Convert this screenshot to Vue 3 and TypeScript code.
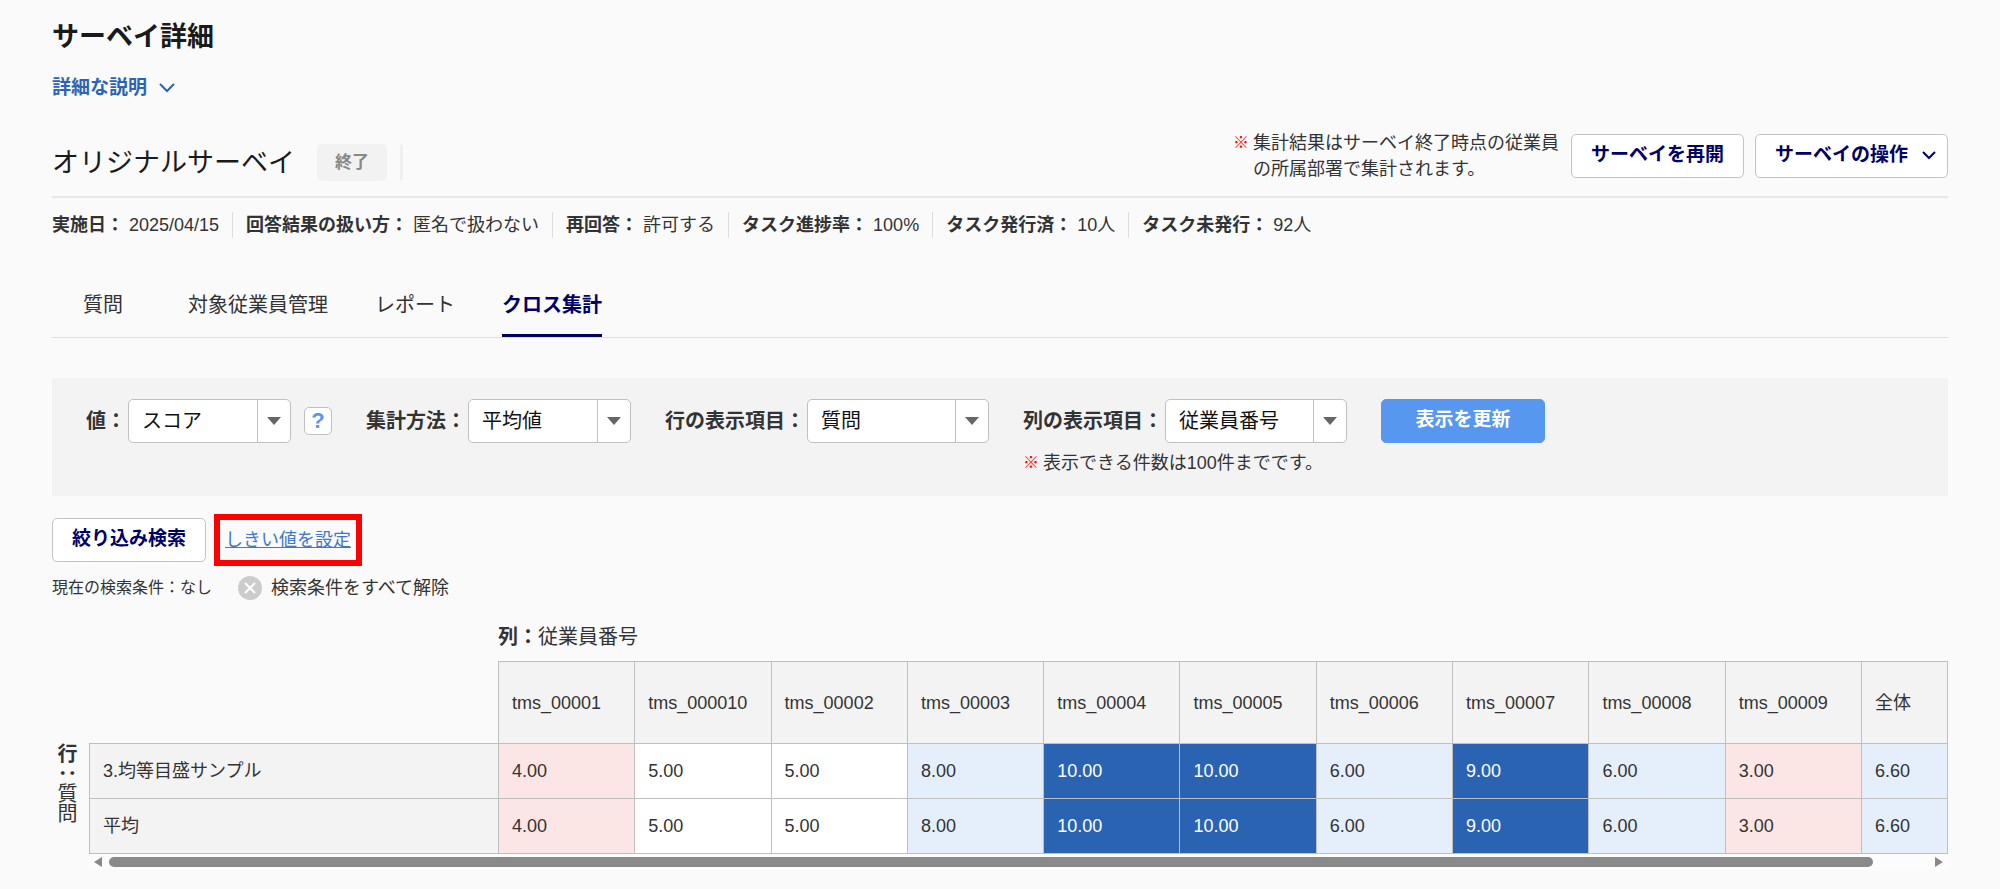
<script setup lang="ts">
import { ref } from 'vue'

interface InfoItem {
  label: string
  value: string
}

interface FilterField {
  id: string
  label: string
  options: string[]
  wide: boolean
  help?: boolean
  note?: string
}

const info: InfoItem[] = [
  { label: '実施日：', value: '2025/04/15' },
  { label: '回答結果の扱い方：', value: '匿名で扱わない' },
  { label: '再回答：', value: '許可する' },
  { label: 'タスク進捗率：', value: '100%' },
  { label: 'タスク発行済：', value: '10人' },
  { label: 'タスク未発行：', value: '92人' },
]

const tabs = ['質問', '対象従業員管理', 'レポート', 'クロス集計']
const activeTab = ref('クロス集計')

const filters: FilterField[] = [
  { id: 'value', label: '値：', options: ['スコア'], wide: false, help: true },
  { id: 'method', label: '集計方法：', options: ['平均値'], wide: false },
  { id: 'rows', label: '行の表示項目：', options: ['質問'], wide: true },
  { id: 'columns', label: '列の表示項目：', options: ['従業員番号'], wide: true, note: '表示できる件数は100件までです。' },
]

const columns = [
  'tms_00001', 'tms_000010', 'tms_00002', 'tms_00003', 'tms_00004', 'tms_00005',
  'tms_00006', 'tms_00007', 'tms_00008', 'tms_00009', '全体',
]

const scores = [4, 5, 5, 8, 10, 10, 6, 9, 6, 3, 6.6]
const rows = [
  { name: '3.均等目盛サンプル', scores },
  { name: '平均', scores },
]

function level(score: number): string {
  if (score >= 9) return 'top'
  if (score >= 6) return 'high'
  if (score < 5) return 'low'
  return 'mid'
}
</script>

<template>
  <main class="page" lang="ja">
    <h1 class="page-title">サーベイ詳細</h1>
    <button type="button" class="more">
      詳細な説明
      <svg class="more-icon" viewBox="0 0 16 10" aria-hidden="true"><path d="M1 1l7 7 7-7" /></svg>
    </button>

    <header class="survey">
      <div class="survey-name">
        <h2>オリジナルサーベイ</h2>
        <span class="badge">終了</span>
        <span class="badge-edge"></span>
      </div>
      <div class="survey-actions">
        <p class="notice"><span class="mark">※</span><span>集計結果はサーベイ終了時点の従業員<br />の所属部署で集計されます。</span></p>
        <div class="buttons">
          <button type="button" class="btn">サーベイを再開</button>
          <button type="button" class="btn btn-menu">
            サーベイの操作
            <svg class="menu-icon" viewBox="0 0 14 9" aria-hidden="true"><path d="M1 1l6 6 6-6" /></svg>
          </button>
        </div>
      </div>
    </header>

    <dl class="info">
      <div v-for="item in info" :key="item.label" class="info-item">
        <dt>{{ item.label }}</dt>
        <dd>{{ item.value }}</dd>
      </div>
    </dl>

    <nav class="tabs">
      <button
        v-for="tab in tabs"
        :key="tab"
        type="button"
        class="tab"
        :class="{ active: tab === activeTab }"
        @click="activeTab = tab"
      >{{ tab }}</button>
    </nav>

    <form class="filters" @submit.prevent>
      <div v-for="field in filters" :key="field.id" class="field">
        <div class="field-line">
          <label :for="field.id">{{ field.label }}</label>
          <div class="select" :class="{ wide: field.wide }">
            <select :id="field.id">
              <option v-for="option in field.options" :key="option">{{ option }}</option>
            </select>
            <span class="arrow"><svg viewBox="0 0 14 8" aria-hidden="true"><path d="M0 0h14L7 8z" /></svg></span>
          </div>
          <button v-if="field.help" type="button" class="help" aria-label="ヘルプ">?</button>
        </div>
        <p v-if="field.note" class="field-note"><span class="mark">※</span>{{ field.note }}</p>
      </div>
      <button type="submit" class="btn btn-primary">表示を更新</button>
    </form>

    <div class="search">
      <button type="button" class="btn btn-search">絞り込み検索</button>
      <div class="highlight"><a href="#">しきい値を設定</a></div>
    </div>
    <div class="conditions">
      <span class="current">現在の検索条件：なし</span>
      <button type="button" class="clear">
        <svg class="clear-icon" viewBox="0 0 24 24" aria-hidden="true">
          <circle cx="12" cy="12" r="12" />
          <path d="M7 7l10 10M17 7L7 17" />
        </svg>
        検索条件をすべて解除
      </button>
    </div>

    <section class="cross">
      <p class="row-axis"><b>行：</b>質問</p>
      <div class="cross-body">
        <p class="column-axis"><b>列：</b>従業員番号</p>
        <table>
          <colgroup>
            <col class="col-name" />
            <col v-for="column in columns" :key="column" :class="{ 'col-total': column === '全体' }" />
          </colgroup>
          <thead>
            <tr>
              <td class="corner"></td>
              <th v-for="column in columns" :key="column" scope="col">{{ column }}</th>
            </tr>
          </thead>
          <tbody>
            <tr v-for="row in rows" :key="row.name">
              <th scope="row">{{ row.name }}</th>
              <td v-for="(score, i) in row.scores" :key="i" :class="level(score)">{{ score.toFixed(2) }}</td>
            </tr>
          </tbody>
        </table>
        <div class="scrollbar" aria-hidden="true">
          <svg viewBox="0 0 8 10"><path d="M8 0v10L0 5z" /></svg>
          <div class="track"><div class="thumb"></div></div>
          <svg viewBox="0 0 8 10"><path d="M0 0v10l8-5z" /></svg>
        </div>
      </div>
    </section>
  </main>
</template>

<style>
body {
  background: #fafafa;
}
</style>

<style scoped>
.page {
  padding: 17px 52px 20px;
  color: #333;
  font-family: 'Liberation Sans', 'Noto Sans CJK JP', sans-serif;
  font-size: 18px;
  line-height: 26px;
}

.page * {
  box-sizing: border-box;
}

h1,
h2,
p,
dl,
dd {
  margin: 0;
}

button,
select {
  font-family: inherit;
  cursor: pointer;
}

.page-title {
  color: #1a1a1a;
  font-size: 27px;
  line-height: 40px;
}

.more {
  display: flex;
  align-items: center;
  gap: 12px;
  margin-top: 18px;
  padding: 0;
  border: 0;
  background: none;
  color: #2c63b4;
  font-size: 19px;
  font-weight: bold;
  line-height: 26px;
}

.more-icon {
  width: 16px;
  height: 10px;
  fill: none;
  stroke: currentColor;
  stroke-width: 2;
}

.survey {
  display: flex;
  justify-content: space-between;
  align-items: flex-start;
  margin-top: 29px;
  padding-bottom: 14px;
  border-bottom: 2px solid #e8e8e8;
}

.survey-name {
  display: flex;
  align-items: center;
  margin-top: 14px;
}

.survey-name h2 {
  color: #1a1a1a;
  font-size: 27px;
  font-weight: normal;
  line-height: 36px;
}

.badge {
  margin-left: 22px;
  padding: 0 18px;
  border-radius: 5px;
  background: #f2f2f2;
  color: #888;
  font-size: 17px;
  font-weight: bold;
  line-height: 37px;
}

.badge-edge {
  width: 3px;
  height: 37px;
  margin-left: 13px;
  border-radius: 0 3px 3px 0;
  background: #f0f0f0;
}

.survey-actions {
  display: flex;
  align-items: center;
  gap: 12px;
}

.notice {
  display: flex;
  gap: 4px;
}

.mark {
  color: #f00;
  font-size: 16px;
}

.buttons {
  display: flex;
  gap: 11px;
}

.btn {
  height: 44px;
  padding: 0 19px 2px;
  border: 1px solid #c4c4c4;
  border-radius: 5px;
  background: #fff;
  color: #006;
  font-size: 19px;
  font-weight: bold;
  line-height: 28px;
}

.btn-menu {
  display: flex;
  align-items: center;
  gap: 14px;
  padding-right: 11px;
}

.menu-icon {
  width: 14px;
  height: 9px;
  fill: none;
  stroke: currentColor;
  stroke-width: 2;
}

.info {
  display: flex;
  margin-top: 14px;
}

.info-item {
  display: flex;
  gap: 5px;
}

.info-item + .info-item {
  margin-left: 13px;
  padding-left: 13px;
  border-left: 1px solid #ddd;
}

dt {
  font-weight: bold;
}

.tabs {
  display: flex;
  margin-top: 52px;
  padding-left: 31px;
  border-bottom: 1px solid #ddd;
}

.tab {
  margin-right: 47px;
  padding: 0 0 14px;
  border: 0;
  border-bottom: 3px solid transparent;
  background: none;
  color: #333;
  font-size: 20px;
  line-height: 30px;
}

.tab:first-child {
  margin-right: 65px;
}

.tab.active {
  border-bottom-color: #006;
  color: #006;
  font-weight: bold;
}

.filters {
  display: flex;
  align-items: flex-start;
  gap: 34px;
  min-height: 118px;
  margin-top: 40px;
  padding: 21px 34px 0;
  background: #f3f3f3;
}

.field-line {
  display: flex;
  align-items: center;
}

.field-line label {
  margin-right: 2px;
  font-size: 20px;
  font-weight: bold;
  line-height: 30px;
}

.select {
  display: grid;
  grid-template-columns: 1fr 33px;
  width: 163px;
  height: 44px;
  border: 1px solid #c0c0c0;
  border-radius: 5px;
  background: #fff;
}

.select.wide {
  width: 182px;
}

.select select {
  grid-area: 1 / 1 / 2 / 3;
  padding: 0 40px 0 13px;
  border: 0;
  appearance: none;
  background: none;
  color: #111;
  font-size: 20px;
}

.arrow {
  display: flex;
  grid-area: 1 / 2;
  align-items: center;
  justify-content: center;
  border-left: 1px solid #c0c0c0;
  pointer-events: none;
}

.arrow svg {
  width: 14px;
  height: 8px;
  fill: #666;
}

.help {
  width: 28px;
  height: 28px;
  margin-left: 13px;
  padding: 0;
  border: 1px solid #c0c0c0;
  border-radius: 5px;
  background: #fff;
  color: #5897f0;
  font-size: 22px;
  font-weight: bold;
  line-height: 24px;
}

.field-note {
  display: flex;
  gap: 4px;
  margin-top: 7px;
}

.btn-primary {
  min-width: 164px;
  border-color: #5897f0;
  background: #5897f0;
  color: #fff;
}

.search {
  display: flex;
  align-items: center;
  gap: 8px;
  margin-top: 18px;
}

.highlight {
  padding: 7px 5px;
  border: 6px solid #f00;
}

.highlight a {
  color: #3f78c8;
}

.conditions {
  display: flex;
  align-items: center;
  gap: 26px;
  margin-top: 9px;
}

.current {
  font-size: 16px;
}

.clear {
  display: flex;
  align-items: center;
  gap: 9px;
  padding: 0;
  border: 0;
  background: none;
  color: #333;
  font-size: 18px;
  line-height: 26px;
}

.clear-icon {
  width: 24px;
  height: 24px;
  fill: #ccc;
  stroke: none;
}

.clear-icon path {
  stroke: #fff;
  stroke-width: 2;
}

.cross {
  display: flex;
  align-items: flex-start;
  gap: 13px;
  margin-top: 21px;
  padding-left: 4px;
}

.row-axis {
  flex: none;
  margin-top: 121px;
  font-size: 20px;
  line-height: 20px;
  writing-mode: vertical-rl;
}

.cross-body {
  flex: 1;
}

.column-axis {
  padding-left: 409px;
  font-size: 20px;
  line-height: 30px;
}

table {
  width: 100%;
  margin-top: 9px;
  border-collapse: collapse;
  table-layout: fixed;
}

.col-name {
  width: 409px;
}

.col-total {
  width: 86px;
}

th,
td {
  height: 55px;
  padding: 0 13px;
  border: 1px solid #bfbfbf;
  font-weight: normal;
  text-align: left;
}

th {
  background: #f3f3f3;
}

thead th {
  height: 82px;
}

.corner {
  border-top-color: transparent;
  border-left-color: transparent;
}

.mid {
  background: #fff;
}

.low {
  background: #fbe6e5;
}

.high {
  background: #e5effc;
}

.top {
  background: #2b63b3;
  color: #fff;
}

.scrollbar {
  display: flex;
  align-items: center;
  gap: 7px;
  height: 16px;
  padding: 0 5px;
  background: #fcfcfc;
}

.scrollbar svg {
  width: 8px;
  height: 10px;
  fill: #888;
}

.track {
  flex: 1;
}

.thumb {
  width: 97%;
  height: 10px;
  border-radius: 5px;
  background: #8a8a8a;
}
</style>
